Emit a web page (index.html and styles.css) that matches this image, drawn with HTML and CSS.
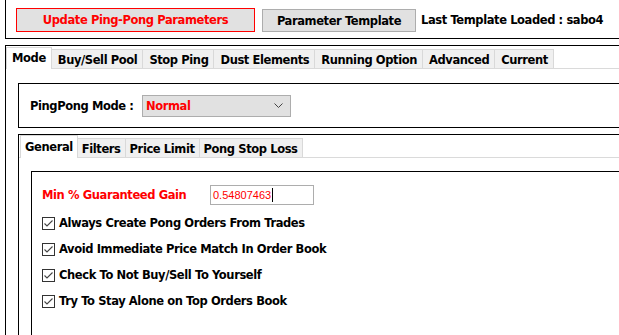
FILE: index.html
```html
<!DOCTYPE html>
<html>
<head>
<meta charset="utf-8">
<link rel="stylesheet" href="styles.css">
</head>
<body>
<div class="top">
  <div class="btn btn-red">Update Ping-Pong Parameters</div>
  <div class="btn btn-tpl">Parameter Template</div>
  <span class="last">Last Template Loaded : sabo4</span>
</div>
<div class="main">
  <div class="tabs maintabs">
    <div class="tab active">Mode</div>
    <div class="tab">Buy/Sell Pool</div>
    <div class="tab">Stop Ping</div>
    <div class="tab">Dust Elements</div>
    <div class="tab">Running Option</div>
    <div class="tab">Advanced</div>
    <div class="tab">Current</div>
  </div>
  <div class="page">
    <div class="group mode-group">
      <span class="mode-lbl">PingPong Mode :</span>
      <div class="select">
        <span class="sel-text">Normal</span>
        <svg class="chev" width="9" height="5" viewBox="0 0 9 5"><polyline points="0.5,0.5 4.5,4.5 8.5,0.5" fill="none" stroke="#444" stroke-width="1"/></svg>
      </div>
    </div>
    <div class="sub">
      <div class="tabs subtabs">
        <div class="tab active">General</div>
        <div class="tab">Filters</div>
        <div class="tab">Price Limit</div>
        <div class="tab">Pong Stop Loss</div>
      </div>
      <div class="subpage">
        <div class="group gen-group">
          <div class="min-row">
            <span class="min-lbl">Min % Guaranteed Gain</span>
            <div class="input"><span class="val">0.54807463</span><span class="caret"></span></div>
          </div>
          <div class="chk-row"><span class="chk"><svg width="11" height="11" viewBox="0 0 11 11"><polyline points="1.5,5.5 4,8 9.5,2.5" fill="none" stroke="#444" stroke-width="1.1"/></svg></span>Always Create Pong Orders From Trades</div>
          <div class="chk-row"><span class="chk"><svg width="11" height="11" viewBox="0 0 11 11"><polyline points="1.5,5.5 4,8 9.5,2.5" fill="none" stroke="#444" stroke-width="1.1"/></svg></span>Avoid Immediate Price Match In Order Book</div>
          <div class="chk-row"><span class="chk"><svg width="11" height="11" viewBox="0 0 11 11"><polyline points="1.5,5.5 4,8 9.5,2.5" fill="none" stroke="#444" stroke-width="1.1"/></svg></span>Check To Not Buy/Sell To Yourself</div>
          <div class="chk-row"><span class="chk"><svg width="11" height="11" viewBox="0 0 11 11"><polyline points="1.5,5.5 4,8 9.5,2.5" fill="none" stroke="#444" stroke-width="1.1"/></svg></span>Try To Stay Alone on Top Orders Book</div>
        </div>
      </div>
    </div>
  </div>
</div>
</body>
</html>
```

FILE: styles.css
```css
html, body {
  margin: 0;
  padding: 0;
  overflow: hidden;
  background: #ffffff;
}
body {
  width: 619px;
  height: 335px;
  font-family: "DejaVu Sans", Verdana, sans-serif;
  font-size: 11.5px;
  letter-spacing: -0.4px;
  font-weight: bold;
  color: #000;
}
.top {
  margin-left: 5px;
  width: 900px;
  border-left: 1px solid #000;
  border-bottom: 1px solid #000;
  display: flex;
  align-items: flex-start;
  padding-left: 10px;
  padding-top: 8px;
  box-sizing: border-box;
  height: 39px;
}
.btn {
  box-sizing: border-box;
  display: flex;
  align-items: center;
  justify-content: center;
  background: #e1e1e1;
  border: 1px solid #adadad;
}
.btn-red {
  width: 239px;
  height: 24px;
  border-color: #ff0000;
  color: #ff0000;
}
.btn-tpl {
  width: 154px;
  height: 23px;
  margin-left: 7px;
  margin-top: 1px;
}
.last {
  margin-left: 5px;
  line-height: 23px;
  margin-top: 1px;
  white-space: nowrap;
}
.main {
  margin-top: 6px;
  margin-left: 5px;
  width: 900px;
  height: 400px;
  border-top: 1px solid #000;
  border-left: 1px solid #000;
}
.tabs {
  display: flex;
  align-items: flex-end;
  height: 22px;
  border-bottom: 1px solid #dadada;
}
.tab {
  box-sizing: border-box;
  height: 19px;
  background: #f0f0f0;
  border: 1px solid #d9d9d9;
  border-bottom: none;
  margin-right: -1px;
  display: flex;
  align-items: center;
  white-space: nowrap;
}
.maintabs .tab {
  padding: 2px 5px 0 6px;
}
.maintabs .tab.active {
  padding: 0 5px 1px 5px;
}
.tab.active {
  height: 22px;
  margin-bottom: -1px;
  background: #ffffff;
}
.page {
  padding: 14px 0 0 12px;
}
.group {
  border: 1px solid #000;
}
.mode-group {
  display: flex;
  align-items: center;
  height: 43px;
  box-sizing: content-box;
  padding-left: 11px;
}
.mode-lbl {
  white-space: nowrap;
  width: 112px;
}
.select {
  box-sizing: border-box;
  width: 149px;
  height: 22px;
  background: #e1e1e1;
  border: 1px solid #adadad;
  display: flex;
  align-items: center;
  justify-content: space-between;
  padding: 0 7px 0 3px;
}
.sel-text {
  color: #ff0000;
}
.chev {
  display: block;
}
.sub {
  margin-top: 6px;
  border-top: 1px solid #000;
  border-left: 1px solid #000;
  height: 300px;
}
.subtabs {
  padding-left: 1px;
}
.subtabs .tab {
  padding: 2px 4px 0 4px;
}
.subtabs .tab.active {
  height: 23px;
  padding: 0 4px 1px 4px;
}
.subpage {
  padding: 13px 0 0 12px;
}
.gen-group {
  padding: 13px 0 0 10px;
  height: 300px;
}
.min-row {
  display: flex;
  align-items: center;
  height: 20px;
}
.min-lbl {
  color: #ff0000;
  width: 168px;
  white-space: nowrap;
}
.input {
  box-sizing: border-box;
  width: 104px;
  height: 20px;
  border: 1px solid #adadad;
  background: #fff;
  display: flex;
  align-items: center;
  padding-left: 2px;
  font-family: "Liberation Sans", Arial, sans-serif;
  font-weight: normal;
  font-size: 11px;
  letter-spacing: 0;
  color: #ff0000;
}
.caret {
  display: inline-block;
  width: 1px;
  height: 14px;
  background: #000;
  margin-left: 1px;
}
.chk-row {
  display: flex;
  align-items: center;
  height: 26px;
  white-space: nowrap;
}
.min-row + .chk-row {
  margin-top: 5px;
}
.chk {
  box-sizing: border-box;
  width: 13px;
  height: 13px;
  border: 1px solid #333;
  background: #fff;
  margin-right: 4px;
  display: flex;
}
.chk svg {
  display: block;
}
```
